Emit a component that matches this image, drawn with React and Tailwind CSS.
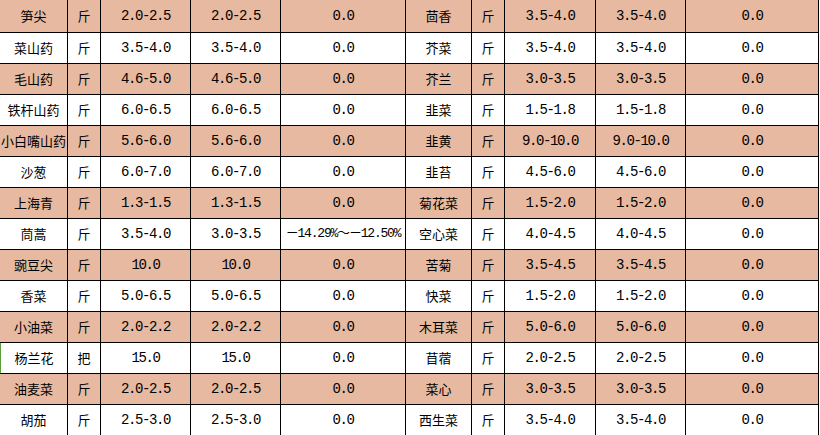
import React from "react";

const rows = [
  ["笋尖", "斤", "2.0-2.5", "2.0-2.5", "0.0", "茴香", "斤", "3.5-4.0", "3.5-4.0", "0.0"],
  ["菜山药", "斤", "3.5-4.0", "3.5-4.0", "0.0", "芥菜", "斤", "3.5-4.0", "3.5-4.0", "0.0"],
  ["毛山药", "斤", "4.6-5.0", "4.6-5.0", "0.0", "芥兰", "斤", "3.0-3.5", "3.0-3.5", "0.0"],
  ["铁杆山药", "斤", "6.0-6.5", "6.0-6.5", "0.0", "韭菜", "斤", "1.5-1.8", "1.5-1.8", "0.0"],
  ["小白嘴山药", "斤", "5.6-6.0", "5.6-6.0", "0.0", "韭黄", "斤", "9.0-10.0", "9.0-10.0", "0.0"],
  ["沙葱", "斤", "6.0-7.0", "6.0-7.0", "0.0", "韭苔", "斤", "4.5-6.0", "4.5-6.0", "0.0"],
  ["上海青", "斤", "1.3-1.5", "1.3-1.5", "0.0", "菊花菜", "斤", "1.5-2.0", "1.5-2.0", "0.0"],
  ["茼蒿", "斤", "3.5-4.0", "3.0-3.5", "－14.29%～－12.50%", "空心菜", "斤", "4.0-4.5", "4.0-4.5", "0.0"],
  ["豌豆尖", "斤", "10.0", "10.0", "0.0", "苦菊", "斤", "3.5-4.5", "3.5-4.5", "0.0"],
  ["香菜", "斤", "5.0-6.5", "5.0-6.5", "0.0", "快菜", "斤", "1.5-2.0", "1.5-2.0", "0.0"],
  ["小油菜", "斤", "2.0-2.2", "2.0-2.2", "0.0", "木耳菜", "斤", "5.0-6.0", "5.0-6.0", "0.0"],
  ["杨兰花", "把", "15.0", "15.0", "0.0", "苜蓿", "斤", "2.0-2.5", "2.0-2.5", "0.0"],
  ["油麦菜", "斤", "2.0-2.5", "2.0-2.5", "0.0", "菜心", "斤", "3.0-3.5", "3.0-3.5", "0.0"],
  ["胡茄", "斤", "2.5-3.0", "2.5-3.0", "0.0", "西生菜", "斤", "3.5-4.0", "3.5-4.0", "0.0"],
];

const textCols = [0, 1, 5, 6];

export default function App() {
  return (
    <div className="w-[820px] h-[435px] overflow-hidden bg-white text-black">
      <div className="w-[819px]">
        {rows.map((r, i) => (
          <div
            key={i}
            className={
              "grid grid-cols-[68px_33px_90px_90px_125px_66px_33px_91px_90px_133px] border-b border-black " +
              (i === 0 ? "h-[33px] " : "h-[31px] ") +
              (i % 2 === 0 ? "bg-[#e6b9a0]" : "bg-white")
            }
          >
            {r.map((c, j) => (
              <div
                key={j}
                className={
                  "flex items-center justify-center border-r border-black whitespace-nowrap overflow-hidden " +
                  (j === 0 && i === 11 ? "border-l border-l-[#5a9e3a] " : "") +
                  (textCols.includes(j)
                    ? "text-[13px] font-['Noto_Sans_CJK_SC',sans-serif]"
                    : c.startsWith("－")
                    ? "text-[13px] font-['Liberation_Mono','Noto_Sans_CJK_SC',monospace] tracking-[-1.2px]"
                    : "text-[14px] font-['Liberation_Mono',monospace] tracking-[-1.4px]")
                }
              >
                {c}
              </div>
            ))}
          </div>
        ))}
      </div>
    </div>
  );
}
